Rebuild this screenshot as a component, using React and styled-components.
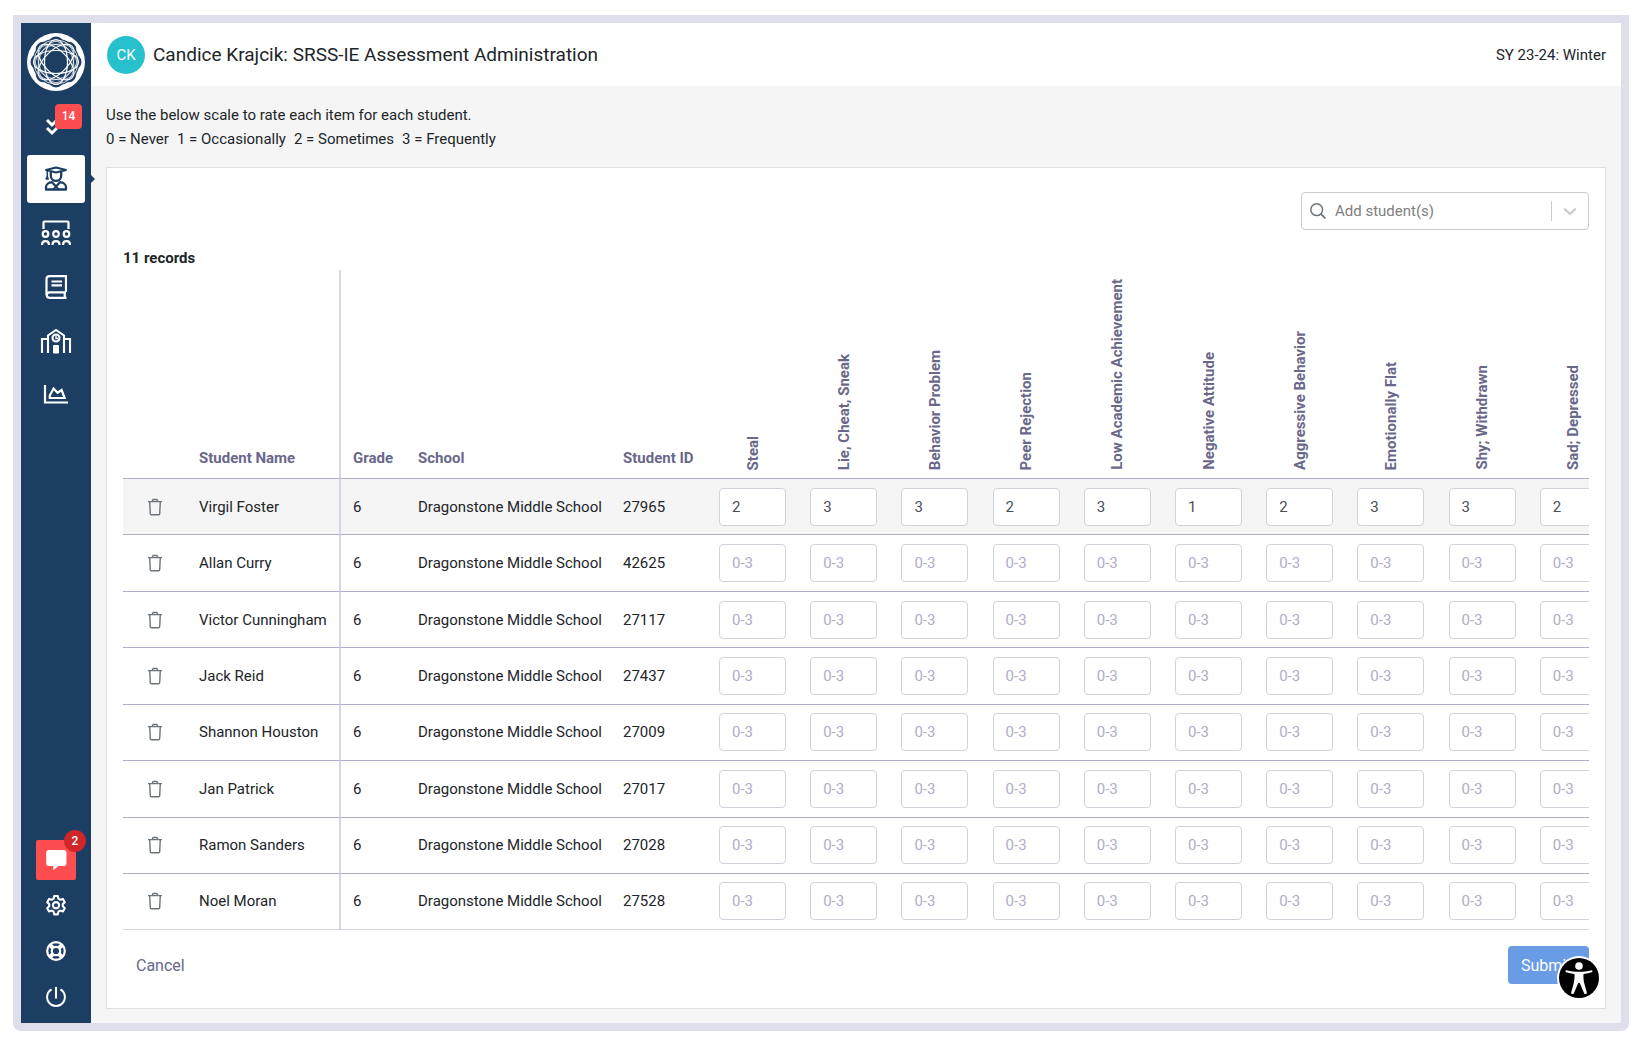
import React from 'react';
import styled, { createGlobalStyle } from 'styled-components';

const GlobalStyle = createGlobalStyle`
  * {
    box-sizing: border-box;
  }
  body {
    margin: 0;
    background-color: #ffffff;
    color: #212529;
    font-family: Roboto, 'Liberation Sans', sans-serif;
    font-size: 15px;
    line-height: 24px;
  }
  button, input {
    font-family: inherit;
    font-size: inherit;
  }
`;

const Page = styled.div`
  display: flex;
  flex-direction: column;
  height: 100vh;
  min-height: 720px;
  padding: 15px 10px 17px 13px;
`;

const Frame = styled.div`
  display: flex;
  flex: 1;
  min-height: 0;
  border: 8px solid #dfdfec;
  border-radius: 0 0 8px 8px;
`;

const Sidebar = styled.nav`
  position: relative;
  display: flex;
  flex-direction: column;
  align-items: center;
  flex: 0 0 70px;
  gap: 6px;
  padding: 10px 6px 3px;
  background-color: #1d3e63;
`;

const Logo = styled.a`
  display: block;
  height: 62px;
  svg {
    display: block;
  }
`;

const NavLink = styled.a`
  position: relative;
  display: flex;
  align-items: center;
  justify-content: center;
  width: 100%;
  height: 48px;
  border-radius: 3px;
  color: ${props => (props.$active ? '#1d3e63' : '#ffffff')};
  background-color: ${props => (props.$active ? '#ffffff' : 'transparent')};
  ${props => props.$active && `
    &::after {
      content: '';
      position: absolute;
      right: -10px;
      top: 20px;
      border: 4px solid transparent;
      border-right-width: 0;
      border-left-color: #1d3e63;
    }
  `}
`;

const TaskBadge = styled.span`
  position: absolute;
  top: 3px;
  right: 3px;
  width: 27px;
  height: 25px;
  border-radius: 4px;
  background-color: #fc4d50;
  color: #ffffff;
  font-size: 12px;
  font-weight: 500;
  line-height: 25px;
  text-align: center;
`;

const NavBottom = styled.div`
  display: flex;
  flex-direction: column;
  align-items: center;
  margin-top: auto;
`;

const ChatButton = styled.button`
  position: relative;
  display: flex;
  align-items: center;
  justify-content: center;
  width: 40px;
  height: 40px;
  margin-bottom: 2px;
  padding: 0;
  border: 0;
  border-radius: 2px;
  background-color: #fc4d50;
  color: #ffffff;
`;

const ChatBadge = styled.span`
  position: absolute;
  top: -10px;
  right: -10px;
  width: 22px;
  height: 22px;
  border-radius: 11px;
  background-color: #d02629;
  font-size: 12px;
  font-weight: 500;
  line-height: 22px;
  text-align: center;
`;

const ToolLink = styled.a`
  display: flex;
  align-items: center;
  justify-content: center;
  width: 46px;
  height: 46px;
  color: #ffffff;
`;

const Content = styled.div`
  display: flex;
  flex-direction: column;
  flex: 1;
  min-width: 0;
  background-color: #f5f5f5;
`;

const Header = styled.header`
  display: flex;
  align-items: center;
  flex: 0 0 63px;
  padding: 0 15px 0 16px;
  background-color: #ffffff;
`;

const Avatar = styled.span`
  width: 38px;
  height: 38px;
  margin-right: 8px;
  border-radius: 50%;
  background-color: #26c1cd;
  color: #ffffff;
  line-height: 38px;
  text-align: center;
`;

const Title = styled.h1`
  flex: 1;
  margin: 0;
  font-size: 19px;
  font-weight: 400;
`;

const Main = styled.main`
  display: flex;
  flex-direction: column;
  flex: 1;
  min-height: 0;
  padding: 17px 15px 14px;
`;

const Instructions = styled.div`
  margin-bottom: 16px;
  p {
    margin: 0;
  }
  span {
    margin-right: 8px;
  }
`;

const Card = styled.section`
  display: flex;
  flex-direction: column;
  flex: 1;
  min-height: 0;
  padding: 24px 16px;
  border: 1px solid #dee0e4;
  background-color: #ffffff;
`;

const SearchBox = styled.label`
  display: flex;
  align-items: center;
  align-self: flex-end;
  width: 288px;
  height: 38px;
  margin-bottom: 16px;
  padding: 0 8px;
  border: 1px solid #cccccc;
  border-radius: 4px;
  color: #cccccc;
  input {
    flex: 1;
    min-width: 0;
    margin-left: 9px;
    padding: 0;
    border: 0;
    outline: 0;
    background: none;
    color: #212529;
    &::placeholder {
      color: #808080;
      opacity: 1;
    }
  }
`;

const Separator = styled.span`
  width: 1px;
  height: 20px;
  margin-right: 8px;
  background-color: #cccccc;
`;

const RecordCount = styled.strong`
  font-weight: 700;
`;

const TableScroller = styled.div`
  flex: 1;
  min-height: 0;
  overflow: auto;
  scrollbar-width: none;
  border-bottom: 1px solid #d5d5e2;
`;

const Table = styled.table`
  width: 100%;
  min-width: 1496px;
  height: 100%;
  table-layout: fixed;
  border-collapse: separate;
  border-spacing: 0;
  white-space: nowrap;
`;

const HeadCell = styled.th`
  height: 209px;
  padding: 0 0 8px 12px;
  border-bottom: 1px solid #b0aec9;
  color: #69678a;
  font-weight: 700;
  text-align: left;
  vertical-align: bottom;
  ${props => props.$sticky && 'border-right: 2px solid #d5d5e5;'}
`;

const ItemHeadCell = styled(HeadCell)`
  padding: 0 12px 8px;
  text-align: center;
  span {
    display: inline-block;
    vertical-align: bottom;
    writing-mode: vertical-rl;
    transform: rotate(180deg);
  }
`;

const Row = styled.tr`
  background-color: ${props => (props.$filled ? '#f5f5f5' : '#ffffff')};
  &:last-child td {
    border-bottom: 0;
  }
`;

const Cell = styled.td`
  padding: 0 0 0 12px;
  border-bottom: 1px solid #b0aec9;
  ${props => props.$sticky && 'border-right: 2px solid #d5d5e5;'}
`;

const DeleteButton = styled.button`
  display: block;
  margin-left: 11px;
  padding: 0 2px;
  border: 0;
  background: none;
  color: #6c757d;
  svg {
    display: block;
  }
`;

const ScoreInput = styled.input`
  display: block;
  width: 67px;
  height: 38px;
  padding: 0 12px;
  border: 1px solid #ced4da;
  border-radius: 4px;
  background-color: #ffffff;
  color: #495057;
  &::placeholder {
    color: #b0adc8;
    opacity: 1;
  }
`;

const Actions = styled.div`
  display: flex;
  justify-content: space-between;
  margin-top: 16px;
`;

const Button = styled.button`
  min-width: 81px;
  height: 38px;
  padding: 0 13px;
  border: 0;
  border-radius: 4px;
  font-size: 16px;
  text-align: left;
  color: ${props => (props.$primary ? '#ffffff' : '#69678a')};
  background-color: ${props => (props.$primary ? '#6a9be5' : 'transparent')};
`;

const AccessibilityButton = styled.button`
  position: fixed;
  right: 38px;
  bottom: 48px;
  padding: 0;
  border: 0;
  background: none;
  svg {
    display: block;
  }
`;

const LogoMark = () => (
  <svg width="58" height="58" viewBox="-29 -29 58 58" fill="none">
    <circle r="29" fill="#ffffff" />
    <circle r="23.5" fill="#1d3e63" />
    {[0, 45, 90, 135, 180, 225, 270, 315].map(angle => (
      <ellipse key={angle} cx="17" rx="8.500" ry="8" fill="#1d3e63" transform={`rotate(${angle})`} />
    ))}
    {[0, 45, 90, 135].map(angle => (
      <ellipse key={angle} rx="22.500" ry="11.500" stroke="#ffffff" strokeWidth="1.200" transform={`rotate(${angle})`} />
    ))}
    {[22, 67, 112, 157].map(angle => (
      <ellipse key={angle} rx="22" ry="17" stroke="#ffffff" strokeWidth="0.700" transform={`rotate(${angle})`} />
    ))}
  </svg>
);

const ChevronsIcon = () => (
  <svg width="24" height="24" viewBox="0 0 24 24" fill="none" stroke="currentColor" strokeWidth="2.900">
    <path d="M3 7l5 5 5-5M3 15l5 5 5-5" />
  </svg>
);

const StudentIcon = () => (
  <svg width="24" height="26" viewBox="0 0.500 24 26" fill="none" stroke="currentColor" strokeWidth="2.300" strokeLinejoin="round">
    <path d="M2 4.500l10-2.500 10 2.500-10 2.500z" strokeWidth="2" />
    <path d="M3.300 5.500v5.500M3.200 11l-1 2.400h2z" strokeWidth="1.500" />
    <path d="M6.800 6.500v3.700a5.200 5.200 0 0 0 10.400 0V6.500" />
    <path d="M8 16.700C4.500 17 2 19 2 21.500V24h20v-2.500c0-2.500-2.500-4.500-6-4.800L12 21z" />
    <path d="M12 21.200l2.800 2.600M12 21.200l-2.800 2.600" strokeWidth="1.800" />
  </svg>
);

const ClassIcon = () => (
  <svg width="30" height="26" viewBox="0 1 30 26" fill="none" stroke="currentColor" strokeWidth="2.200">
    <path d="M2.500 10V3.700A1.200 1.200 0 0 1 3.700 2.500h22.600a1.200 1.200 0 0 1 1.200 1.200V10" />
    {[4.5, 15, 25.5].map(x => (
      <g key={x}>
        <circle cx={x} cy="15" r="2.800" />
        <path d={`M${x - 3.4} 26v-.7c0-1.900 1.400-3.200 3.400-3.200s3.400 1.300 3.400 3.200v.7`} />
      </g>
    ))}
  </svg>
);

const BookIcon = () => (
  <svg width="22" height="24" viewBox="0 0 22 24" fill="none" stroke="currentColor" strokeWidth="2.200">
    <path d="M21 17V1.100H4.500A3 3 0 0 0 1.500 4v16" />
    <path d="M21 17.300H4.500a2.700 2.700 0 0 0 0 5.500H21.500M19.700 17.500V23" />
    <path d="M6.500 6.500H17M6.500 10.300H17" />
  </svg>
);

const SchoolIcon = () => (
  <svg width="32" height="26" viewBox="0 1 32 26" fill="none" stroke="currentColor" strokeWidth="2.100">
    <path d="M8 26V8.500l8-5.500 8 5.500V26" />
    <path d="M2 26V12h6M24 12h6v14" />
    <circle cx="16" cy="11" r="3.500" />
    <path d="M16 8.500v3h2.200" strokeWidth="1.400" />
    <path d="M13.500 18.500h5V26h-5z" fill="currentColor" strokeWidth="1" />
  </svg>
);

const ChartIcon = () => (
  <svg width="26" height="20" viewBox="0 0 26 20" fill="none" stroke="currentColor" strokeWidth="2.200">
    <path d="M2 0v17.500h23" />
    <path d="M6.800 13v-2.500L10.600 3.500l4 4.200 4-2.700 3 8z" />
  </svg>
);

const ChatIcon = () => (
  <svg width="22" height="22" viewBox="0 0 22 22" fill="currentColor">
    <path d="M4 1h14.300A3.200 3.200 0 0 1 21.500 4.200v9.600a3 3 0 0 1-3.200 3.200H13.500l-5.200 4.200V17H4.200A3 3 0 0 1 1.200 13.800V4A3 3 0 0 1 4 1z" />
  </svg>
);

const GearIcon = () => (
  <svg width="24" height="24" viewBox="0 0 24 24" fill="none" stroke="currentColor" strokeWidth="2.100" strokeLinejoin="round">
    <path d="M10.200 3h3.600l.6 2.700 1.900 1.100 2.600-.9 1.900 3.300-2 1.900v2.200l2 1.900-1.900 3.300-2.600-.9-1.900 1.100-.6 2.700h-3.600l-.6-2.700-1.900-1.100-2.600.9-1.900-3.300 2-1.900v-2.200l-2-1.900 1.900-3.300 2.600.9 1.900-1.100z" />
    <circle cx="12" cy="12.200" r="3.100" />
  </svg>
);

const HelpIcon = () => (
  <svg width="20" height="20" viewBox="0 0 20 20" fill="none" stroke="currentColor">
    <circle cx="10" cy="10" r="8.800" strokeWidth="2.200" />
    <circle cx="10" cy="10" r="4.200" strokeWidth="2.200" />
    <path d="M4 4l3 3M13 13l3 3M16 4l-3 3M7 13l-3 3" strokeWidth="4.200" />
  </svg>
);

const PowerIcon = () => (
  <svg width="20" height="20" viewBox="0 0 20 20" fill="none" stroke="currentColor" strokeWidth="2">
    <path d="M5.500 2.400a8.900 8.900 0 1 0 9 0M10 0v11.500" />
  </svg>
);

const SearchIcon = () => (
  <svg width="16" height="16" viewBox="0 0 16 16" fill="none" stroke="#6c757d" strokeWidth="1.500">
    <circle cx="6.700" cy="6.700" r="5.900" />
    <path d="M10.800 10.800l4.600 4.600" strokeWidth="1.800" />
  </svg>
);

const CaretIcon = () => (
  <svg width="20" height="20" viewBox="0 0 20 20" fill="none" stroke="#cccccc" strokeWidth="2.300" strokeLinecap="round">
    <path d="M5 8.300l5 4.700 5-4.700" />
  </svg>
);

const TrashIcon = () => (
  <svg width="14" height="18" viewBox="0 0 14 18" fill="none" stroke="currentColor" strokeWidth="1.400" strokeLinejoin="round">
    <path d="M0 3.600h14M4.200 3.400l.8-1.900h4l.8 1.900M1.700 3.600l.6 12.200c0 .7.400 1 1 1h7.400c.6 0 1-.3 1-1l.6-12.200" />
  </svg>
);

const PersonIcon = () => (
  <svg width="44" height="44" viewBox="0 0 44 44">
    <circle cx="22" cy="22" r="22" fill="#ffffff" />
    <circle cx="22" cy="22" r="20" fill="#000000" />
    <circle cx="22" cy="10" r="3.800" fill="#ffffff" />
    <path
      d="M9.500 14.200c4 1.100 8.200 1.600 12.500 1.600s8.500-.5 12.500-1.600c1.200-.2 1.400 1.700.3 2.100-2.600.8-5.300 1.300-8.300 1.600-.3 3.700.2 7.500 1.300 11.300l2 7.300c.4 1.600-2 2.200-2.700.7L23 27.500c-.4-1-1.600-1-2 0l-4.100 9.700c-.7 1.500-3.100.9-2.700-.7l2-7.300c1.100-3.800 1.600-7.600 1.300-11.300-3-.3-5.700-.8-8.300-1.600-1.100-.4-.9-2.300.3-2.100z"
      fill="#ffffff"
    />
  </svg>
);

const items = [
  'Steal',
  'Lie, Cheat, Sneak',
  'Behavior Problem',
  'Peer Rejection',
  'Low Academic Achievement',
  'Negative Attitude',
  'Aggressive Behavior',
  'Emotionally Flat',
  'Shy; Withdrawn',
  'Sad; Depressed',
];

const students = [
  { id: '27965', name: 'Virgil Foster', scores: [2, 3, 3, 2, 3, 1, 2, 3, 3, 2] },
  { id: '42625', name: 'Allan Curry' },
  { id: '27117', name: 'Victor Cunningham' },
  { id: '27437', name: 'Jack Reid' },
  { id: '27009', name: 'Shannon Houston' },
  { id: '27017', name: 'Jan Patrick' },
  { id: '27028', name: 'Ramon Sanders' },
  { id: '27528', name: 'Noel Moran' },
];

const scale = ['0 = Never', '1 = Occasionally', '2 = Sometimes', '3 = Frequently'];

const StudentRow = ({ student }) => (
  <Row $filled={Boolean(student.scores)}>
    <Cell>
      <DeleteButton type="button" aria-label={`Remove ${student.name}`}><TrashIcon /></DeleteButton>
    </Cell>
    <Cell $sticky>{student.name}</Cell>
    <Cell>6</Cell>
    <Cell>Dragonstone Middle School</Cell>
    <Cell>{student.id}</Cell>
    {items.map((item, index) => (
      <Cell key={item}>
        <ScoreInput
          type="text"
          inputMode="numeric"
          placeholder="0-3"
          aria-label={`${item}, ${student.name}`}
          defaultValue={student.scores ? student.scores[index] : ''}
        />
      </Cell>
    ))}
  </Row>
);

const Navigation = () => (
  <Sidebar>
    <Logo href="#home" aria-label="Home"><LogoMark /></Logo>
    <NavLink href="#tasks" aria-label="Tasks">
      <ChevronsIcon />
      <TaskBadge>14</TaskBadge>
    </NavLink>
    <NavLink href="#students" aria-label="Students" $active><StudentIcon /></NavLink>
    <NavLink href="#classes" aria-label="Classes"><ClassIcon /></NavLink>
    <NavLink href="#courses" aria-label="Courses"><BookIcon /></NavLink>
    <NavLink href="#schools" aria-label="Schools"><SchoolIcon /></NavLink>
    <NavLink href="#reports" aria-label="Reports"><ChartIcon /></NavLink>
    <NavBottom>
      <ChatButton type="button" aria-label="Messages">
        <ChatIcon />
        <ChatBadge>2</ChatBadge>
      </ChatButton>
      <ToolLink href="#settings" aria-label="Settings"><GearIcon /></ToolLink>
      <ToolLink href="#help" aria-label="Help"><HelpIcon /></ToolLink>
      <ToolLink href="#logout" aria-label="Log out"><PowerIcon /></ToolLink>
    </NavBottom>
  </Sidebar>
);

const App = () => (
  <Page>
    <GlobalStyle />
    <Frame>
      <Navigation />
      <Content>
        <Header>
          <Avatar>CK</Avatar>
          <Title>Candice Krajcik: SRSS-IE Assessment Administration</Title>
          <span>SY 23-24: Winter</span>
        </Header>
        <Main>
          <Instructions>
            <p>Use the below scale to rate each item for each student.</p>
            <p>{scale.map(step => <span key={step}>{step}</span>)}</p>
          </Instructions>
          <Card>
            <SearchBox>
              <SearchIcon />
              <input type="text" placeholder="Add student(s)" aria-label="Add student(s)" />
              <Separator />
              <CaretIcon />
            </SearchBox>
            <RecordCount>11 records</RecordCount>
            <TableScroller>
              <Table>
                <colgroup>
                  <col width="64" />
                  <col width="154" />
                  <col width="65" />
                  <col width="205" />
                  <col width="96" />
                  {items.map(item => <col key={item} />)}
                </colgroup>
                <thead>
                  <tr>
                    <HeadCell aria-label="Remove" />
                    <HeadCell $sticky>Student Name</HeadCell>
                    <HeadCell>Grade</HeadCell>
                    <HeadCell>School</HeadCell>
                    <HeadCell>Student ID</HeadCell>
                    {items.map(item => <ItemHeadCell key={item}><span>{item}</span></ItemHeadCell>)}
                  </tr>
                </thead>
                <tbody>
                  {students.map(student => <StudentRow key={student.id} student={student} />)}
                </tbody>
              </Table>
            </TableScroller>
            <Actions>
              <Button type="button">Cancel</Button>
              <Button type="submit" $primary>Submit</Button>
            </Actions>
          </Card>
        </Main>
      </Content>
    </Frame>
    <AccessibilityButton type="button" aria-label="Accessibility options"><PersonIcon /></AccessibilityButton>
  </Page>
);

export default App;
